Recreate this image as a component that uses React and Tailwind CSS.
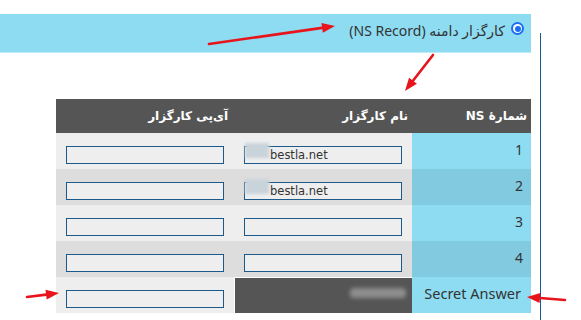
import React from 'react';

const rows = [
  { n: '1', name: 'bestla.net', alt: false },
  { n: '2', name: 'bestla.net', alt: true },
  { n: '3', name: '', alt: false },
  { n: '4', name: '', alt: true },
];

const Field = ({ value }) => (
  <div className="relative w-[158px] h-[18px]">
    <input
      type="text"
      readOnly
      value={value}
      className="w-full h-full border border-[#1d5a8c] bg-[#eeeeee] pl-[25px] text-[11.5px] text-[#333] outline-none"
      style={{ fontFamily: '"DejaVu Sans", sans-serif' }}
    />
    {value && (
      <div className="absolute left-[1px] top-[2px] w-[24px] h-[15px] bg-[#c9d3da] blur-[1.5px]" />
    )}
  </div>
);

const Arrow = ({ x1, y1, x2, y2 }) => {
  const a = Math.atan2(y2 - y1, x2 - x1);
  const len = 13;
  const w = 5;
  const bx = x2 - len * Math.cos(a);
  const by = y2 - len * Math.sin(a);
  const px = -Math.sin(a) * w;
  const py = Math.cos(a) * w;
  return (
    <g>
      <line x1={x1} y1={y1} x2={bx} y2={by} stroke="#e8141c" strokeWidth="2.6" strokeLinecap="round" />
      <polygon points={`${x2},${y2} ${bx + px},${by + py} ${bx - px},${by - py}`} fill="#e8141c" />
    </g>
  );
};

export default function App() {
  return (
    <div
      className="relative h-[320px] w-[581px] overflow-hidden bg-white text-[#333]"
      style={{ fontFamily: '"Noto Sans", "DejaVu Sans", sans-serif' }}
    >
      <div className="flex h-full">
        <div className="w-[531px] flex flex-col">
          {/* radio band */}
          <div className="mt-[14px] h-[39px] bg-[#8ddcf2] border-b border-[#bfeaf7] flex items-start justify-end pt-[8px] pr-[7px] gap-[6px]">
            <span dir="rtl" className="text-[14px] leading-[14px] mt-[2px] text-[#333]">
              کارگزار دامنه (NS Record)
            </span>
            {/* checked radio */}
            <span className="w-[13px] h-[13px] rounded-full bg-[#1b6ef3] flex items-center justify-center">
              <span className="w-[9px] h-[9px] rounded-full bg-white flex items-center justify-center">
                <span className="w-[6px] h-[6px] rounded-full bg-[#1b6ef3]" />
              </span>
            </span>
          </div>

          {/* table */}
          <div className="ml-[56px] mt-[46px] flex flex-col">
            <div className="grid grid-cols-[178px_178px_119px] h-[34px] bg-[#555555] text-white font-bold text-[12px]" style={{ fontFamily: '"DejaVu Sans", sans-serif' }}>
              <div dir="rtl" className="flex items-center pr-[6px]">آی‌پی کارگزار</div>
              <div dir="rtl" className="flex items-center pr-[4px]">نام کارگزار</div>
              <div dir="rtl" className="flex items-center pr-[4px]">شمارهٔ NS</div>
            </div>

            {rows.map((r) => (
              <div key={r.n} className={`grid grid-cols-[178px_178px_119px] h-[36px] ${r.alt ? 'bg-[#dddddd]' : 'bg-[#eeeeee]'}`}>
                <div className="flex items-center pl-[10px] pb-[2px]">
                  <Field value="" />
                </div>
                <div className="flex items-center pl-[10px] pb-[2px]">
                  <Field value={r.name} />
                </div>
                <div className={`flex items-center justify-end pr-[8px] pb-[3px] text-[14px] ${r.alt ? 'bg-[#82cae0]' : 'bg-[#8ddcf2]'}`}>
                  {r.n}
                </div>
              </div>
            ))}

            <div className="grid grid-cols-[178px_178px_119px] h-[36px] bg-[#eeeeee]">
              <div className="flex items-center pl-[10px] pb-[2px]">
                <Field value="" />
              </div>
              <div className="bg-[#555555] border-t border-l border-white flex items-start justify-end pt-[10px] pr-[6px]">
                <div className="w-[56px] h-[10px] bg-[#8e8e8e] blur-[2px] rounded" />
              </div>
              <div className="flex items-center justify-end pr-[10px] pb-[3px] text-[14.5px] bg-[#8ddcf2]">
                Secret Answer
              </div>
            </div>
          </div>
        </div>
        <div className="ml-[9px] mt-[33px] w-px bg-[#1d5a8c]" />
      </div>

      <svg className="absolute inset-0 pointer-events-none" width="581" height="320">
        <Arrow x1={209} y1={44} x2={335} y2={26} />
        <Arrow x1={433} y1={55} x2={405} y2={91} />
        <Arrow x1={27} y1={297} x2={59} y2={293} />
        <Arrow x1={565} y1={300} x2={527} y2={297} />
      </svg>
    </div>
  );
}
